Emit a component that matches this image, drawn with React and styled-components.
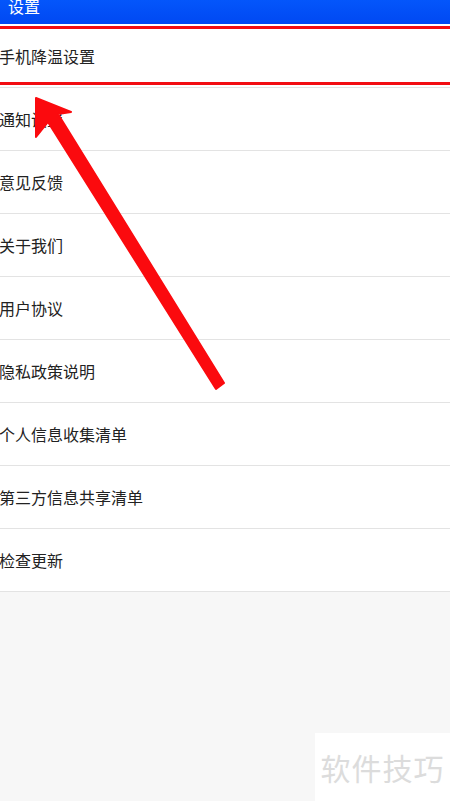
import React from "react";
import styled, { createGlobalStyle } from "styled-components";

const Global = createGlobalStyle`
  html, body { margin: 0; padding: 0; }
  body {
    width: 450px;
    height: 801px;
    overflow: hidden;
    background: #f7f7f7;
    font-family: "Noto Sans CJK SC", "Noto Sans", sans-serif;
  }
`;

const Page = styled.div`
  position: relative;
  width: 450px;
  height: 801px;
  overflow: hidden;
  background: #f7f7f7;
`;

const Header = styled.div`
  height: 24px;
  border-bottom: 1px solid #ffffff;
  background: linear-gradient(#0456fb, #0048f2);
  overflow: hidden;
  display: flex;
  align-items: flex-end;
  padding-left: 8px;
`;

const Title = styled.span`
  color: #ffffff;
  font-size: 16px;
  line-height: 16px;
  margin-bottom: 10px;
`;

const List = styled.div`
  background: #ffffff;
  display: flex;
  flex-direction: column;
`;

const Row = styled.div`
  height: 62px;
  border-bottom: 1px solid #e3e3e3;
  display: flex;
  align-items: center;
  margin-left: -1px;
  font-size: 16px;
  color: #222222;
`;

const Highlight = styled.div`
  position: absolute;
  left: -10px;
  right: -10px;
  top: 26px;
  height: 53px;
  border: 3.5px solid #f20d12;
  pointer-events: none;
`;

const Arrow = styled.svg`
  position: absolute;
  left: 0;
  top: 0;
  pointer-events: none;
`;

const Watermark = styled.div`
  position: absolute;
  right: 0;
  bottom: 0;
  width: 135px;
  height: 68px;
  background: #ffffff;
  display: flex;
  align-items: center;
  justify-content: center;
  color: #dcdcdc;
  font-size: 30px;
  letter-spacing: 1px;
`;

const items = [
  "手机降温设置",
  "通知设置",
  "意见反馈",
  "关于我们",
  "用户协议",
  "隐私政策说明",
  "个人信息收集清单",
  "第三方信息共享清单",
  "检查更新",
];

export default function App() {
  return (
    <>
      <Global />
      <Page>
        <Header>
          <Title>设置</Title>
        </Header>
        <List>
          {items.map((t) => (
            <Row key={t}>{t}</Row>
          ))}
        </List>
        <Highlight />
        <Arrow width="450" height="801" viewBox="0 0 450 801">
          <polygon
            points="36,98 71,112 58,114 224,383 216,389 48,122 36,137"
            fill="#fb0a0e"
            stroke="#fb0a0e"
            strokeWidth="2"
            strokeLinejoin="round"
          />
        </Arrow>
        <Watermark>软件技巧</Watermark>
      </Page>
    </>
  );
}
